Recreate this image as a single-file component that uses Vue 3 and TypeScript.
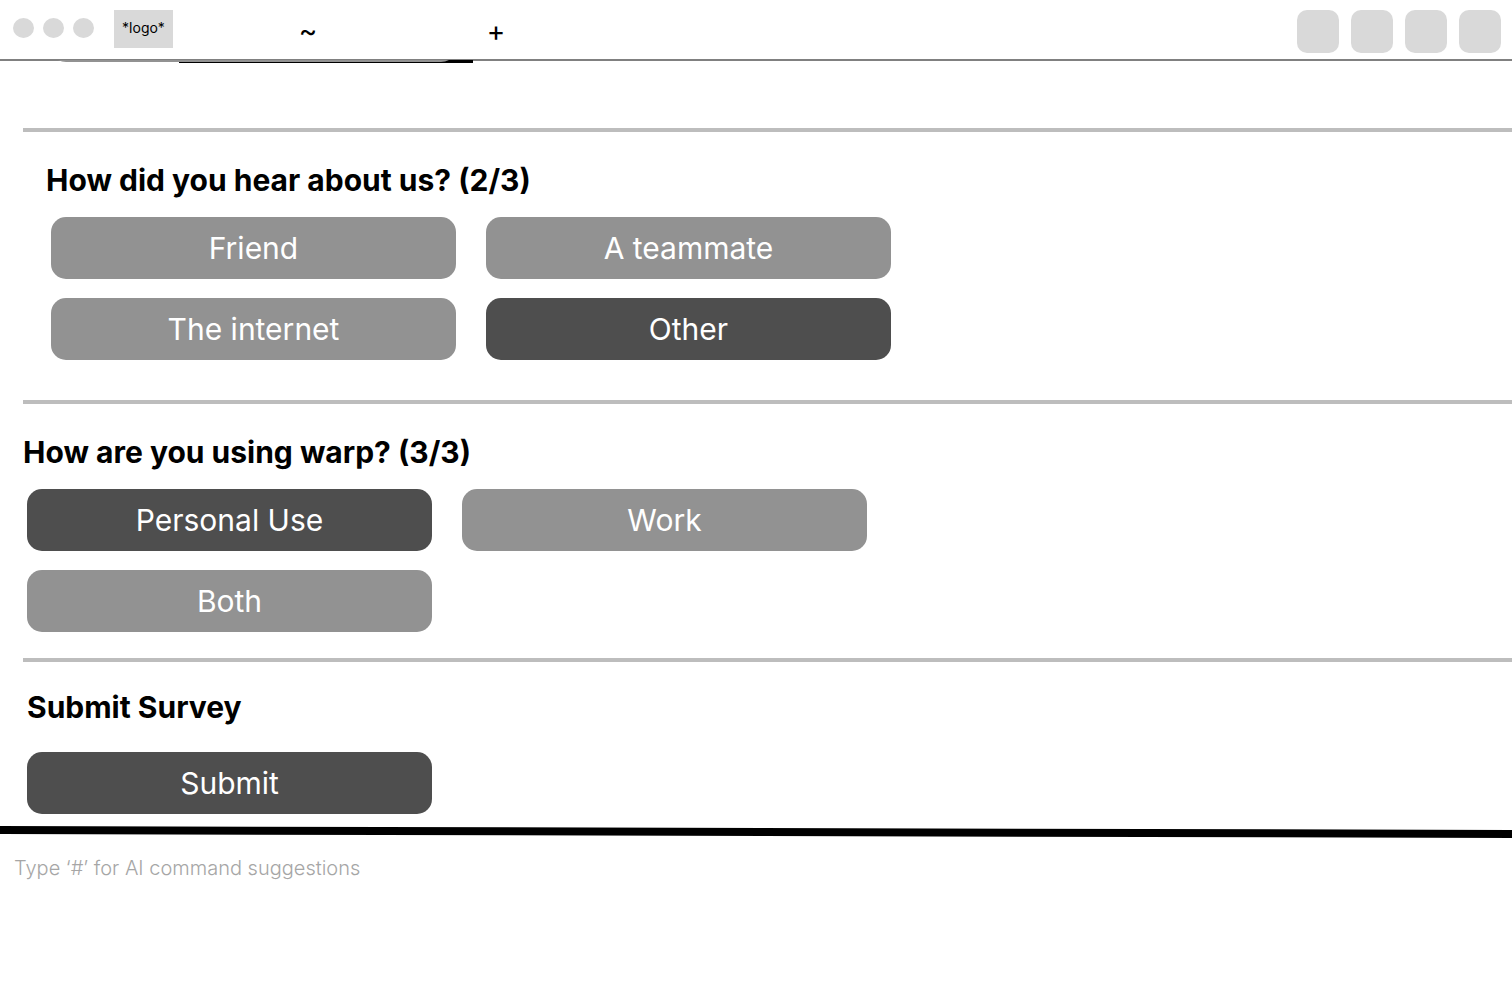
<script setup lang="ts">
import { reactive, ref } from 'vue'

interface Question {
  id: string
  title: string
  options: string[]
}

const questions: Question[] = [
  {
    id: 'source',
    title: 'How did you hear about us? (2/3)',
    options: ['Friend', 'A teammate', 'The internet', 'Other'],
  },
  {
    id: 'usage',
    title: 'How are you using warp? (3/3)',
    options: ['Personal Use', 'Work', 'Both'],
  },
]

const answers = reactive<Record<string, string>>({
  source: 'Other',
  usage: 'Personal Use',
})

const tools: string[] = ['Tool 1', 'Tool 2', 'Tool 3', 'Tool 4']
const command = ref('')
</script>

<template>
  <div class="terminal">
    <header class="topbar">
      <div class="lights">
        <button type="button" class="light" aria-label="Close"></button>
        <button type="button" class="light" aria-label="Minimize"></button>
        <button type="button" class="light" aria-label="Maximize"></button>
      </div>
      <div class="logo">*logo*</div>
      <nav class="tabs" aria-label="Tabs">
        <button type="button" class="tab">~</button>
        <button type="button" class="add" aria-label="New tab">+</button>
      </nav>
      <div class="tools">
        <button v-for="tool in tools" :key="tool" type="button" class="tool" :aria-label="tool"></button>
      </div>
    </header>

    <main class="survey">
      <!-- bottom edge of the answers scrolled under the top bar -->
      <svg class="scrolled" width="473" height="3" viewBox="0 0 473 3" aria-hidden="true">
        <path d="M179 0H473V3H179Z" fill="#000" />
        <path d="M58 0H449Q445 2 441 2H66Q62 2 58 0Z" fill="#929292" />
      </svg>

      <section v-for="q in questions" :key="q.id" class="question" :class="q.id">
        <h2 :id="q.id + '-title'">{{ q.title }}</h2>
        <div class="options" role="group" :aria-labelledby="q.id + '-title'">
          <button
            v-for="option in q.options"
            :key="option"
            type="button"
            class="option"
            :class="{ chosen: answers[q.id] === option }"
            :aria-pressed="answers[q.id] === option"
            @click="answers[q.id] = option"
          >
            {{ option }}
          </button>
        </div>
      </section>

      <section class="question finish">
        <h2>Submit Survey</h2>
        <div class="options">
          <button type="button" class="option chosen">Submit</button>
        </div>
      </section>
    </main>

    <svg class="rule" viewBox="0 0 100 12" preserveAspectRatio="none" aria-hidden="true">
      <path d="M0 0L100 4V12L0 8Z" fill="#000" />
    </svg>

    <footer class="prompt">
      <input v-model="command" type="text" aria-label="Command" placeholder="Type ‘#’ for AI command suggestions" />
    </footer>
  </div>
</template>

<style>
body {
  background: #fff;
}
</style>

<style scoped>
.terminal {
  display: flex;
  flex-direction: column;
  min-height: 100vh;
  overflow-x: hidden;
  font-family: Inter, "Liberation Sans", sans-serif;
  color: #000;
}

button {
  padding: 0;
  border: 0;
  background: none;
  font-family: inherit;
  color: inherit;
  cursor: pointer;
}

.topbar {
  display: flex;
  align-items: flex-start;
  box-sizing: border-box;
  height: 61px;
  padding: 10px 11px 0 13px;
  border-bottom: 2px solid #808080;
}

.lights {
  display: flex;
  gap: 9px;
  padding-top: 8px;
}

.light {
  width: 21px;
  height: 20px;
  border-radius: 50%;
  background: #d9d9d9;
}

.logo {
  width: 59px;
  margin-left: 20px;
  padding-bottom: 2px;
  background: #d9d9d9;
  font-size: 14px;
  line-height: 36px;
  text-align: center;
}

.tabs {
  display: flex;
  flex: 1;
  padding-left: 120px;
}

.tab,
.add {
  width: 30px;
  font-size: 28px;
  line-height: 42px;
}

.tab {
  margin-right: 158px;
}

.tools {
  display: flex;
  gap: 12px;
}

.tool {
  width: 42px;
  height: 43px;
  border-radius: 10px;
  background: #d9d9d9;
}

.scrolled {
  display: block;
  margin-top: -1px;
  margin-bottom: 65px;
}

.question {
  margin-left: 23px;
  border-top: 4px solid #bdbdbd;
}

h2 {
  margin: 0;
  font-size: 30px;
  font-weight: 700;
  line-height: 36px;
}

.options {
  display: grid;
  grid-template-columns: repeat(auto-fit, 405px);
  gap: 19px 30px;
  max-width: 840px;
  padding-left: 4px;
}

.option {
  height: 62px;
  border-radius: 15px;
  background: #929292;
  color: #fff;
  font-size: 30px;
  font-weight: 400;
  line-height: 36px;
}

.option.chosen {
  background: #4e4e4e;
}

.source {
  padding: 30px 0 40px 23px;
}

.source h2 {
  margin-bottom: 19px;
}

.source .options {
  padding-left: 5px;
}

.usage {
  padding: 30px 0 26px;
}

.usage h2 {
  margin-bottom: 19px;
}

.finish {
  padding: 27px 0 12px;
}

.finish h2 {
  margin-bottom: 27px;
  padding-left: 4px;
}

.rule {
  display: block;
  width: 100%;
  height: 12px;
}

.prompt {
  padding: 16px 14px;
}

.prompt input {
  width: 100%;
  height: 28px;
  padding: 0;
  border: 0;
  outline: 0;
  background: none;
  font-family: inherit;
  font-size: 20px;
  font-weight: 300;
}

.prompt input::placeholder {
  color: #a6a6a6;
  opacity: 1;
}
</style>
